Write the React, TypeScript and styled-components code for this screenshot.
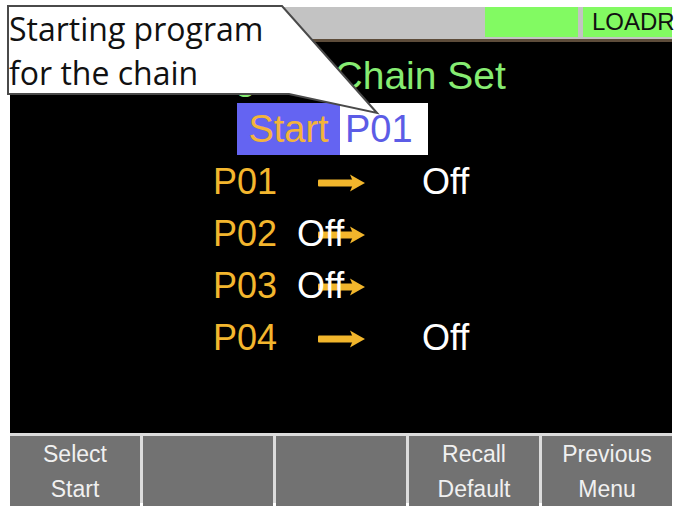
import styled, {createGlobalStyle} from 'styled-components'

const GlobalStyle = createGlobalStyle`
    html, body {
        margin: 0;
        padding: 0;
        background: #fff;
    }
`

const rows = [
    {name: 'P01', off: 'late'},
    {name: 'P02', off: 'early'},
    {name: 'P03', off: 'early'},
    {name: 'P04', off: 'late'},
]

const keys = [['Select', 'Start'], [], [], ['Recall', 'Default'], ['Previous', 'Menu']]

const Arrow = () => (
    <svg width="47" height="18" viewBox="0 0 47 18">
        <rect x="0" y="5.5" width="38" height="7" rx="1" fill="#f2b62c" />
        <path d="M32 0.5 C38 4 43 7 47 9 C43 11 38 14 32 17.5 L35.5 9 Z" fill="#f2b62c" />
    </svg>
)

const App = () => {
    return (
        <Page>
            <GlobalStyle />
            <Screen>
                <StatusBar>
                    <GreenBox $width={93} />
                    <GreenBox $width={89}>LOADR</GreenBox>
                </StatusBar>
                <Main>
                    <Title>Program Chain Set</Title>
                    <StartBox>
                        <StartLabel>Start</StartLabel>
                        <StartValue>P01</StartValue>
                    </StartBox>
                    <ChainList>
                        {rows.map((r) => (
                            <ChainRow key={r.name}>
                                <ProgName>{r.name}</ProgName>
                                <ArrowCell>
                                    <Arrow />
                                </ArrowCell>
                                <OffText $early={r.off === 'early'}>Off</OffText>
                            </ChainRow>
                        ))}
                    </ChainList>
                </Main>
                <SoftKeys>
                    {keys.map((k, i) => (
                        <SoftKey key={i}>
                            {k.map((line) => (
                                <span key={line}>{line}</span>
                            ))}
                        </SoftKey>
                    ))}
                </SoftKeys>
            </Screen>
            <Callout>
                <svg width="382" height="120" viewBox="0 0 382 120">
                    <polygon
                        points="1,1 275,1 370,108 282,89 1,89"
                        fill="#fff"
                        stroke="#4a4a4a"
                        strokeWidth="2"
                        strokeLinejoin="miter"
                    />
                </svg>
                <CalloutText>
                    Starting program
                    <br />
                    for the chain
                </CalloutText>
            </Callout>
        </Page>
    )
}

const Page = styled.div`
    position: relative;
    width: 678px;
    height: 506px;
    padding: 7px 0 0 10px;
    box-sizing: border-box;
`

const Screen = styled.div`
    width: 662px;
    display: flex;
    flex-direction: column;
    font-family: 'Liberation Sans', Arial, sans-serif;
`

const StatusBar = styled.div`
    height: 32px;
    background: #c3c3c3;
    border-bottom: 3px solid #5d4c3a;
    display: flex;
    justify-content: flex-end;
    gap: 5px;
`

const GreenBox = styled.div<{$width: number}>`
    width: ${(p) => p.$width}px;
    height: 30px;
    background: #82fa62;
    color: #111;
    font-size: 24px;
    line-height: 30px;
    padding-left: 9px;
    box-sizing: border-box;
    white-space: nowrap;
`

const Main = styled.div`
    height: 391px;
    background: #000;
    display: flex;
    flex-direction: column;
`

const Title = styled.div`
    margin-top: 12px;
    padding-right: 2px;
    height: 44px;
    font-size: 39px;
    line-height: 44px;
    color: #86ec72;
    text-align: center;
    white-space: nowrap;
`

const StartBox = styled.div`
    margin: 5px 0 0 227px;
    display: flex;
    height: 52px;
    font-size: 38px;
    line-height: 52px;
`

const StartLabel = styled.div`
    width: 103px;
    background: #6464f2;
    color: #f3b43a;
    text-align: center;
`

const StartValue = styled.div`
    width: 88px;
    background: #fff;
    color: #5c5ce6;
    padding-left: 5px;
    box-sizing: border-box;
`

const ChainList = styled.div`
    margin-left: 203px;
    display: flex;
    flex-direction: column;
    margin-top: 1px;
`

const ChainRow = styled.div`
    display: grid;
    grid-template-columns: 84px 21px 47px 57px auto;
    height: 52px;
    font-size: 36px;
    line-height: 52px;
    align-items: center;
`

const ProgName = styled.div`
    grid-row: 1;
    grid-column: 1;
    color: #f3b62e;
`

const ArrowCell = styled.div`
    grid-row: 1;
    grid-column: 3;
    display: flex;
    align-items: center;
    height: 18px;
    margin-top: 1px;
`

const OffText = styled.div<{$early: boolean}>`
    grid-row: 1;
    grid-column: ${(p) => (p.$early ? '2 / span 4' : '5')};
    color: #fff;
`

const SoftKeys = styled.div`
    height: 70px;
    border-top: 3px solid #dcdcdc;
    box-sizing: border-box;
    background: #dcdcdc;
    display: grid;
    grid-template-columns: repeat(5, 1fr);
    gap: 3px;
`

const SoftKey = styled.div`
    background: #727272;
    color: #f0f0f0;
    font-size: 23px;
    line-height: 35px;
    padding-top: 1px;
    display: flex;
    flex-direction: column;
    align-items: center;
`

const Callout = styled.div`
    position: absolute;
    left: 7px;
    top: 5px;
    width: 382px;
    height: 120px;

    svg {
        position: absolute;
        left: 0;
        top: 0;
    }
`

const CalloutText = styled.div`
    position: relative;
    padding: 2px 0 0 2px;
    font-family: 'Open Sans', 'Noto Sans', sans-serif;
    font-size: 32px;
    line-height: 44px;
    color: #111;
    white-space: nowrap;
`

export default App
